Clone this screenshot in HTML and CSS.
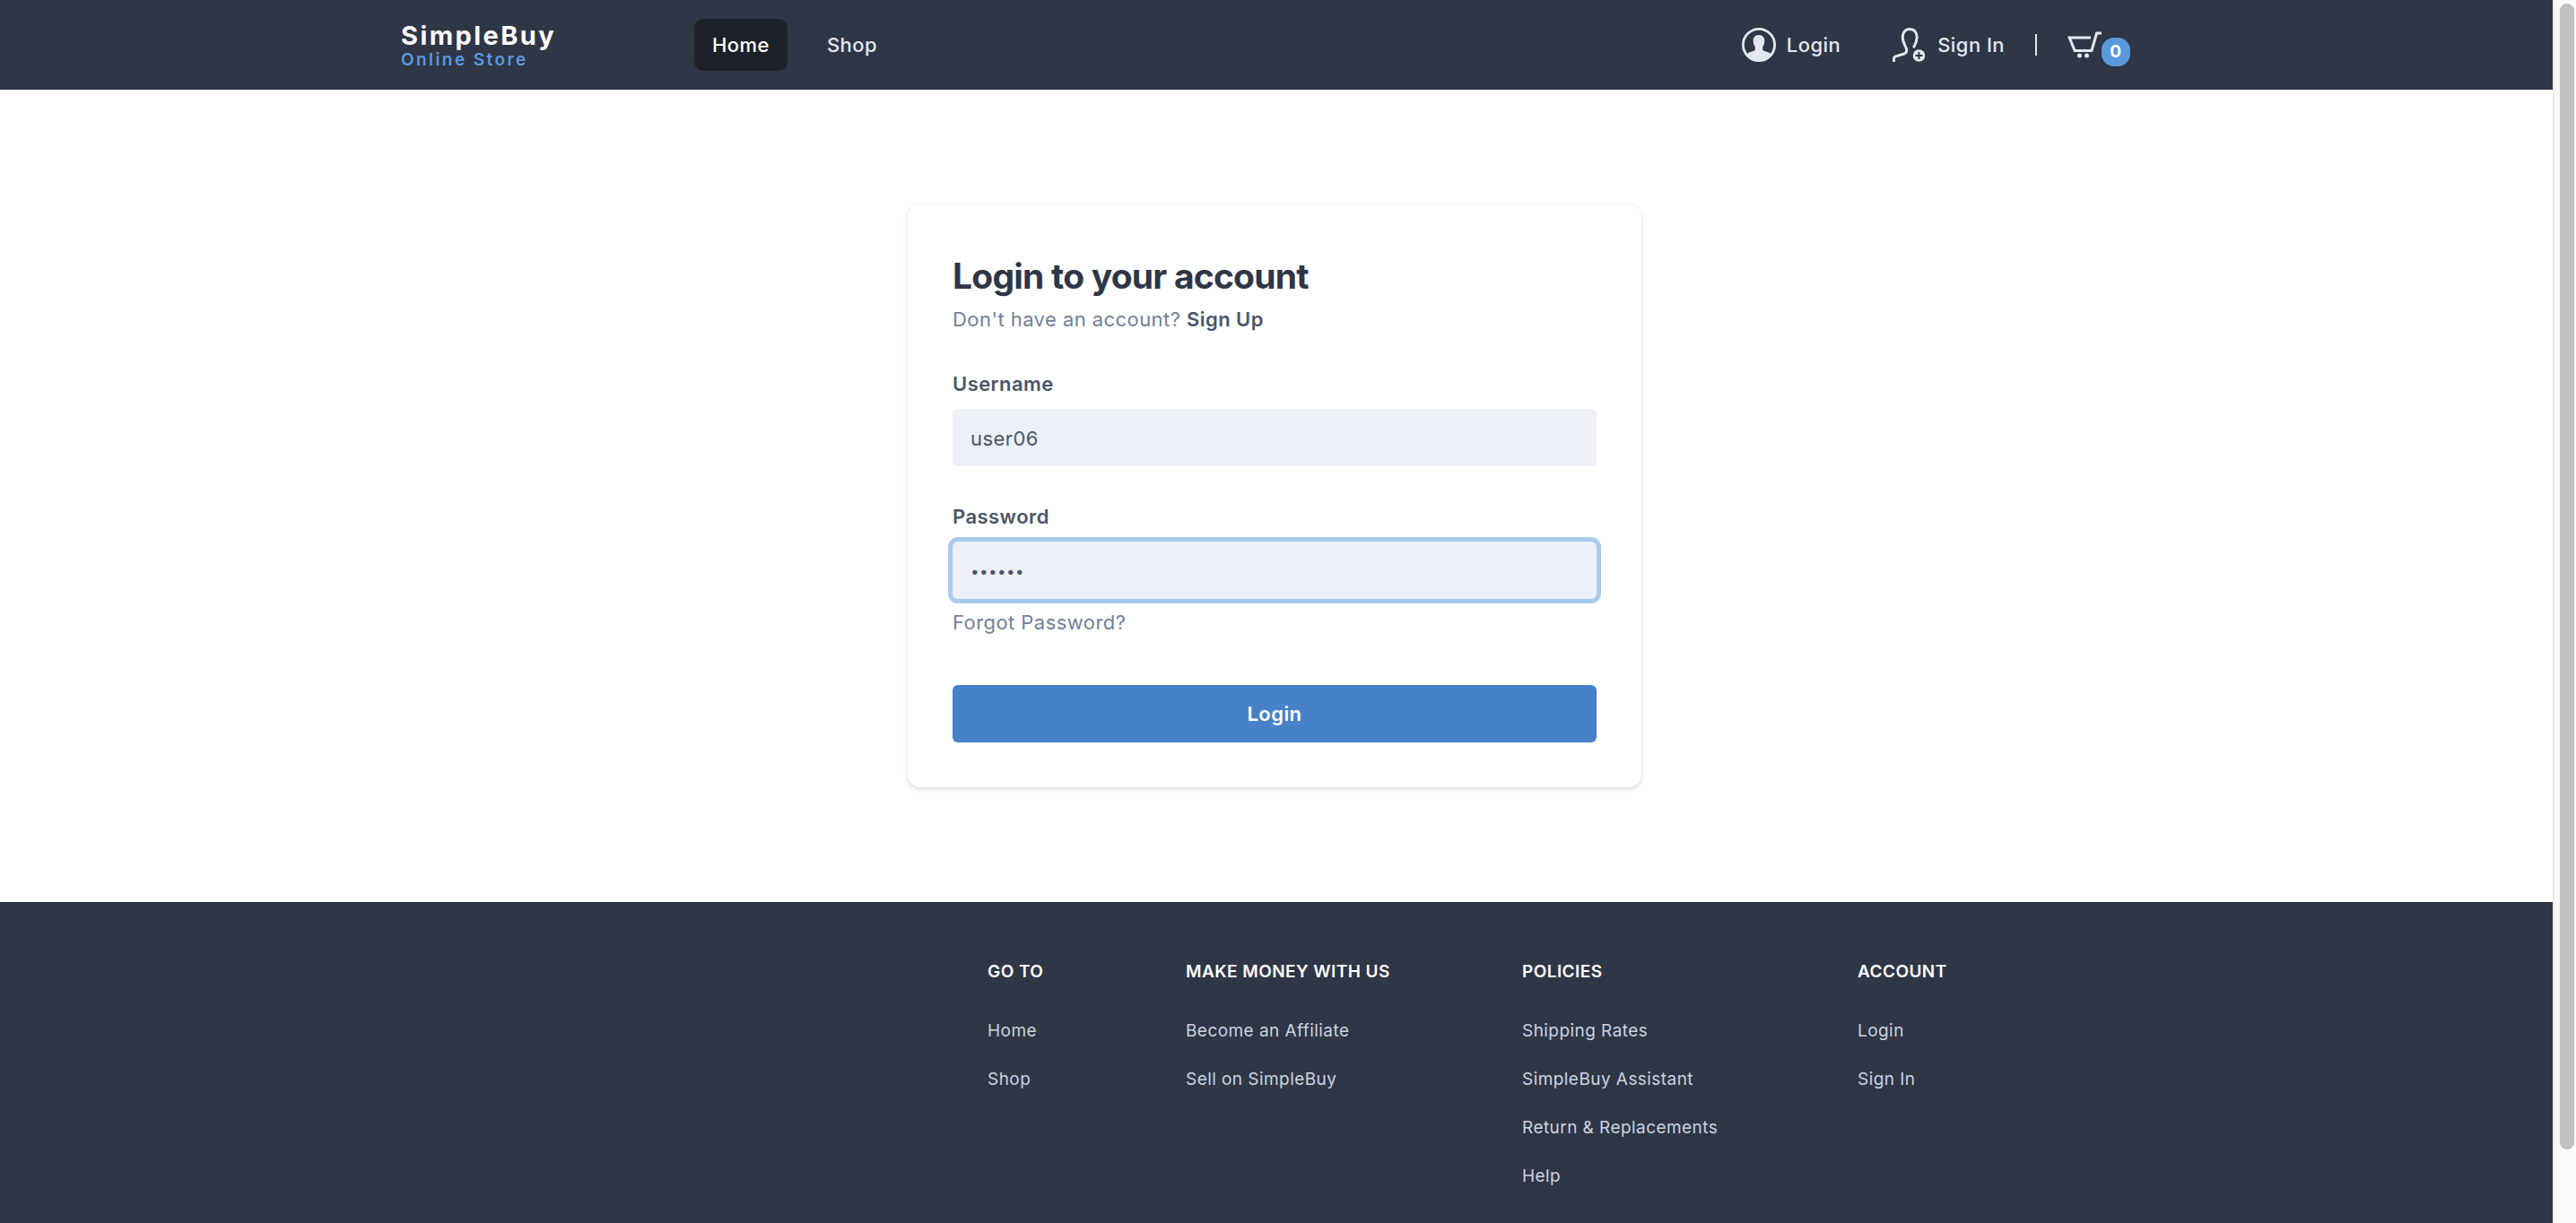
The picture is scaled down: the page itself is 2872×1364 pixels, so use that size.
FILE: index.html
```
<!DOCTYPE html>
<html lang="en">
<head>
<meta charset="UTF-8" />
<meta name="viewport" content="width=device-width, initial-scale=1.0"/>
<title>SimpleBuy - Login</title>
<link rel="stylesheet" href="styles.css">
</head>
<body>
<div class="window">
  <div class="page">
    <header class="header">
      <div class="container header-inner">
        <a class="logo" href="#">
          <span class="logo-name">SimpleBuy</span>
          <span class="logo-tag">Online Store</span>
        </a>
        <nav class="nav">
          <a class="nav-link active" href="#">Home</a>
          <a class="nav-link" href="#">Shop</a>
        </nav>
        <div class="user-menu">
          <a class="user-link" href="#">
            <svg class="icon" viewBox="0 0 38 38" aria-hidden="true">
              <circle cx="19" cy="19" r="17.6" fill="none" stroke="currentColor" stroke-width="2.8"/>
              <path fill="currentColor" d="M19 8c4.200 0 6.600 2.800 6.300 7.200-.2 3-1.100 4.600-2.100 6v2.800c0 1.200.8 1.600 2.300 2.100 3 .9 5 1.500 6.800 3.200C29.300 34 24.500 37 19 37S8.700 34 5.700 29.300c1.800-1.700 3.800-2.300 6.800-3.200 1.500-.5 2.300-.9 2.300-2.100v-2.800c-1-1.400-1.900-3-2.100-6C12.400 10.800 14.800 8 19 8z"/>
            </svg>
            <span>Login</span>
          </a>
          <a class="user-link" href="#">
            <svg class="icon" viewBox="0 0 38 38" aria-hidden="true">
              <path fill="none" stroke="currentColor" stroke-width="3" d="M1.500 38v-3.500c0-1.400.8-2.200 2-2.600l8.600-2.600c2.600-.9 3.700-2.100 3.700-4.300 0-1.800-.9-3.200-2-5.400-1.300-2.600-2.600-5.400-2.600-9 0-5.400 3.200-9.100 8-9.100s8 3.700 8 9.100c0 3.600-1.200 7.200-3.300 10.600L23 22"/>
              <circle cx="29.500" cy="31" r="6.800" fill="currentColor"/>
              <path class="plus" d="M29.500 27v8M25.500 31h8"/>
            </svg>
            <span>Sign In</span>
          </a>
          <span class="divider"></span>
          <a class="cart" href="#" aria-label="Cart">
            <svg class="icon" viewBox="0 0 38 38" aria-hidden="true">
              <path fill="none" stroke="currentColor" stroke-width="3" d="M26 11H2.200L8.200 25.500H27L32.600 6H38"/>
              <circle cx="13.500" cy="31" r="2.500" fill="currentColor"/>
              <circle cx="21.500" cy="31" r="2.500" fill="currentColor"/>
            </svg>
            <span class="badge">0</span>
          </a>
        </div>
      </div>
    </header>

    <main class="main">
      <form class="card">
        <h1>Login to your account</h1>
        <p class="hint">Don't have an account? <a href="#">Sign Up</a></p>
        <div class="field">
          <label for="username">Username</label>
          <input id="username" type="text" value="user06" />
        </div>
        <div class="field">
          <label for="password">Password</label>
          <input class="focused" id="password" type="password" value="user06" />
        </div>
        <a class="forgot" href="#">Forgot Password?</a>
        <button type="button">Login</button>
      </form>
    </main>

    <footer class="footer">
      <div class="container footer-grid">
        <div class="col">
          <h2>Go to</h2>
          <a href="#">Home</a>
          <a href="#">Shop</a>
        </div>
        <div class="col">
          <h2>Make money with us</h2>
          <a href="#">Become an Affiliate</a>
          <a href="#">Sell on SimpleBuy</a>
        </div>
        <div class="col">
          <h2>Policies</h2>
          <a href="#">Shipping Rates</a>
          <a href="#">SimpleBuy Assistant</a>
          <a href="#">Return &amp; Replacements</a>
          <a href="#">Help</a>
        </div>
        <div class="col">
          <h2>Account</h2>
          <a href="#">Login</a>
          <a href="#">Sign In</a>
        </div>
      </div>
    </footer>
  </div>
  <div class="scrollbar"><div class="thumb"></div></div>
</div>
</body>
</html>
```
FILE: styles.css
```
:root {
  --dark: #2f3646;
  --darker: #1d2129;
  --text: #4b5568;
  --muted: #738096;
  --light: #e3e8f0;
  --field: #edf0f6;
  --blue: #5a98dc;
  --button: #4781c8;
  --ring: #a9cbee;
  --font: Inter, "Liberation Sans", sans-serif;
}

* {
  box-sizing: border-box;
}

body {
  margin: 0;
  font-family: var(--font);
  font-size: 22px;
  letter-spacing: 0.02em;
  color: var(--text);
  background: #fff;
}

a {
  color: inherit;
  text-decoration: none;
}

.window {
  display: flex;
  height: 100vh;
  overflow: hidden;
}

.page {
  flex: 1;
  display: flex;
  flex-direction: column;
}

.container {
  width: 100%;
  max-width: 2048px;
  margin: 0 auto;
  padding: 0 48px;
}

/* header */
.header {
  padding: 20px 0;
  background: var(--dark);
  color: var(--light);
}

.header-inner {
  display: flex;
  align-items: center;
  height: 60px;
}

.logo {
  display: flex;
  flex-direction: column;
  min-width: 327px;
  font-weight: 600;
  letter-spacing: 0.11em;
}

.logo-name {
  font-size: 29px;
  line-height: 34px;
  font-weight: 700;
  color: #fff;
}

.logo-tag {
  font-size: 19px;
  line-height: 20px;
  color: var(--blue);
}

.nav {
  display: flex;
  gap: 24px;
  font-weight: 500;
}

.nav-link {
  padding: 0 20px;
  line-height: 58px;
  border-radius: 10px;
}

.nav-link.active {
  background: var(--darker);
  color: #fff;
}

.user-menu {
  display: flex;
  align-items: center;
  margin-left: auto;
  padding-right: 24px;
  font-weight: 500;
}

.user-link {
  display: flex;
  align-items: center;
  gap: 12px;
  margin-right: 58px;
}

.icon {
  display: block;
  width: 38px;
  height: 38px;
}

.plus {
  stroke: var(--dark);
  stroke-width: 2;
}

.divider {
  width: 2px;
  height: 24px;
  margin-left: -24px;
  margin-right: 34px;
  background: var(--light);
}

.cart {
  display: flex;
  align-items: center;
}

.badge {
  width: 32px;
  margin-top: 16px;
  line-height: 32px;
  border-radius: 14px;
  background: var(--blue);
  color: #fff;
  font-size: 19px;
  font-weight: 700;
  text-align: center;
}

/* login form */
.main {
  display: flex;
  justify-content: center;
  padding: 128px 4px 128px 0;
}

.card {
  display: flex;
  flex-direction: column;
  width: 100%;
  max-width: 818px;
  padding: 50px;
  border-radius: 14px;
  background: #fff;
  box-shadow: 0 2px 6px rgba(0, 0, 0, 0.1), 0 2px 4px rgba(0, 0, 0, 0.06);
}

h1 {
  margin: 0;
  font-size: 39px;
  line-height: 60px;
  font-weight: 700;
  letter-spacing: -0.02em;
  color: var(--dark);
}

.hint {
  margin: 0 0 38px;
  line-height: 36px;
  color: var(--muted);
}

.hint a {
  font-weight: 600;
  color: var(--text);
}

.field {
  display: flex;
  flex-direction: column;
  gap: 12px;
}

.field + .field {
  margin-top: 40px;
}

label {
  line-height: 32px;
  font-weight: 600;
}

input {
  height: 64px;
  padding: 2px 20px 0;
  border: none;
  border-radius: 6px;
  outline: none;
  background: var(--field);
  color: var(--text);
  font: inherit;
  letter-spacing: inherit;
}

input[type="password"] {
  font-size: 17px;
}

input.focused {
  box-shadow: 0 0 0 5px var(--ring);
}

.forgot {
  margin-top: 8px;
  line-height: 36px;
  color: var(--muted);
}

button {
  height: 64px;
  margin-top: 52px;
  border: none;
  border-radius: 6px;
  background: var(--button);
  color: #fff;
  font: inherit;
  font-weight: 600;
  letter-spacing: inherit;
  cursor: pointer;
}

/* footer */
.footer {
  flex: 1;
  padding: 65px 0;
  background: var(--dark);
  font-size: 19px;
}

.footer-grid {
  display: grid;
  grid-template-columns: 221fr 375fr 374fr 328fr;
  padding-left: 702px;
}

.col {
  display: flex;
  flex-direction: column;
  gap: 28px;
  line-height: 26px;
  color: #cbd4e0;
}

h2 {
  margin: 0 0 12px;
  font-size: 19px;
  font-weight: 600;
  text-transform: uppercase;
  color: #fff;
}

/* page scrollbar */
.scrollbar {
  width: 26px;
  padding: 4px 2px 0 6px;
  border-left: 2px solid #e8e8e8;
  background: #fafafa;
}

.thumb {
  height: 94%;
  border-radius: 8px;
  background: #c1c1c1;
}
```
